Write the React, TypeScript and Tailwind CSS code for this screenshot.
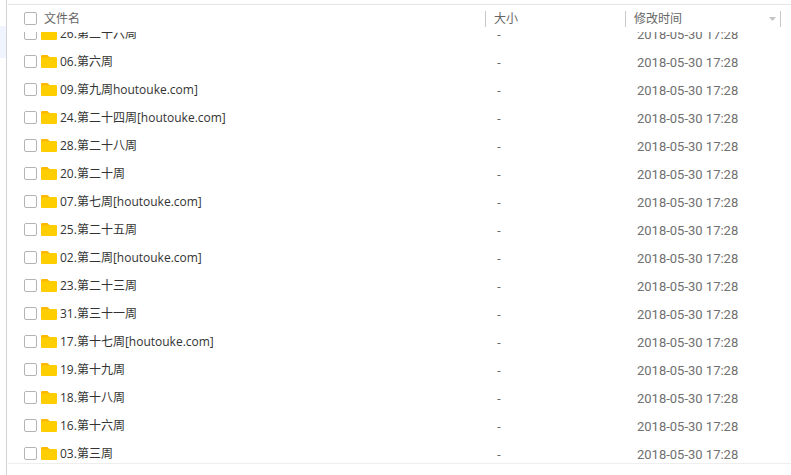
import React from "react";

interface FolderItem {
  name: string;
  size: string;
  modified: string;
}

const names = [
  "26.第二十六周",
  "06.第六周",
  "09.第九周houtouke.com]",
  "24.第二十四周[houtouke.com]",
  "28.第二十八周",
  "20.第二十周",
  "07.第七周[houtouke.com]",
  "25.第二十五周",
  "02.第二周[houtouke.com]",
  "23.第二十三周",
  "31.第三十一周",
  "17.第十七周[houtouke.com]",
  "19.第十九周",
  "18.第十八周",
  "16.第十六周",
  "03.第三周",
];

const folders: FolderItem[] = names.map((name) => ({
  name,
  size: "-",
  modified: "2018-05-30 17:28",
}));

const FolderIcon = () => (
  <svg className="h-[13px] w-4 shrink-0" viewBox="0 0 16 13" aria-hidden="true">
    <path d="M0 4V1Q0 0 1 0H6.5L8.5 2V4H0Z" fill="#ffb800" />
    <path d="M0 2.5H7.5L8.5 2H15Q16 2 16 3V12Q16 13 15 13H1Q0 13 0 12Z" fill="#ffce00" />
  </svg>
);

const Checkbox = ({ label }: { label: string }) => (
  <input
    type="checkbox"
    aria-label={label}
    className="m-0 h-[13px] w-[13px] shrink-0 appearance-none rounded-xs border border-[#b4b4b4] bg-white checked:bg-blue-500"
  />
);

const Columns = () => (
  <colgroup>
    <col />
    <col className="w-[140px]" />
    <col className="w-[166px]" />
  </colgroup>
);

const HeaderRow = () => (
  <table className="w-full table-fixed text-left text-[#666]">
    <Columns />
    <thead>
      <tr className="h-[27px]">
        <th className="p-0 font-normal">
          <div className="flex items-center gap-[7px] pl-4">
            <Checkbox label="全选" />
            <span>文件名</span>
          </div>
        </th>
        <th className="p-0 font-normal">
          <div className="flex h-4 items-center border-l border-[#c8c8c8] pl-2">大小</div>
        </th>
        <th className="p-0 font-normal" aria-sort="descending">
          <div className="mr-[10px] flex h-4 items-center justify-between border-x border-[#c8c8c8] pr-1 pl-2">
            <span>修改时间</span>
            <svg className="h-1 w-[7px]" viewBox="0 0 7 4" aria-hidden="true">
              <path d="M0 0H7L3.5 4Z" fill="#c4c4c4" />
            </svg>
          </div>
        </th>
      </tr>
    </thead>
  </table>
);

const FileRow = ({ item }: { item: FolderItem }) => (
  <tr className="h-7 hover:bg-[#f4f8ff]">
    <td className="p-0 text-[#333]">
      <label className="flex items-center pl-4">
        <span className="flex items-center gap-1 pb-px">
          <Checkbox label={item.name} />
          <FolderIcon />
        </span>
        <span className="pl-[3px]">{item.name}</span>
      </label>
    </td>
    <td className="px-0 pt-0.5 pb-0 pl-3 text-[#666]">{item.size}</td>
    <td className="px-0 pt-0.5 pb-0 pl-3 font-['Roboto','Noto_Sans_CJK_SC',sans-serif] text-[13px] text-[#707070]">
      {item.modified}
    </td>
  </tr>
);

const App: React.FC = () => {
  return (
    <div className="flex h-screen bg-white font-['Open_Sans','Noto_Sans_CJK_SC',sans-serif] text-[12px] leading-4">
      <aside className="w-[7px] shrink-0 border-r border-[#d2d4d8] pt-[26px]">
        <div className="h-8 bg-[#f0f4ff]" />
      </aside>

      <main className="ml-px flex min-w-0 flex-1 flex-col pt-1">
        <div className="border-t border-[#e6e6e6]">
          <HeaderRow />
        </div>

        <div className="min-h-0 flex-1 overflow-hidden">
          {/* list is scrolled part of a row past the header */}
          <table className="-mt-3 w-full table-fixed">
            <Columns />
            <tbody>
              {folders.map((item) => (
                <FileRow key={item.name} item={item} />
              ))}
            </tbody>
          </table>
        </div>

        <footer className="h-3 shrink-0 border-t border-[#eee]" />
      </main>
    </div>
  );
};

export default App;
